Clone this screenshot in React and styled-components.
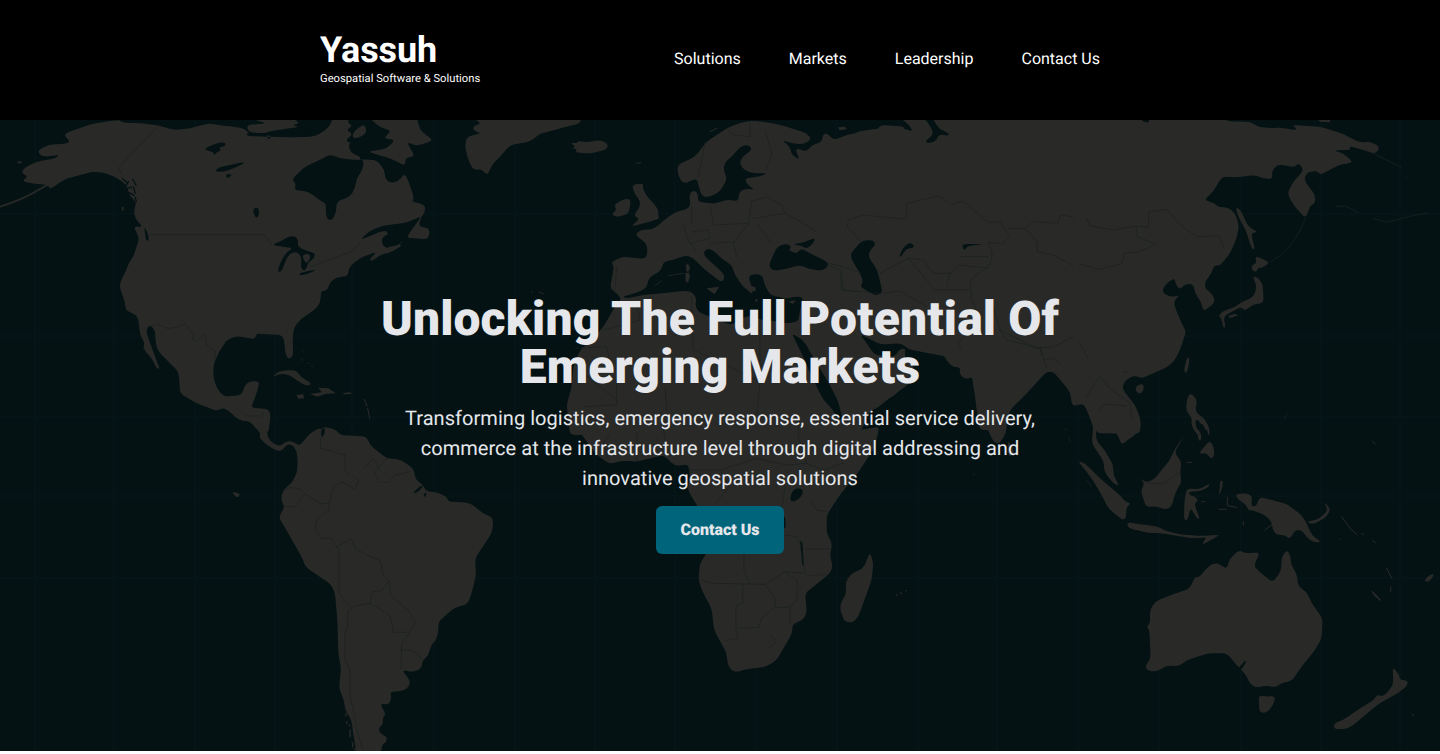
import React from 'react';
import styled, { createGlobalStyle } from 'styled-components';

const SEA = '#041214';
const LAND = '#292a28';
const BORDER = '#182020';

const GlobalStyle = createGlobalStyle`
  *, *::before, *::after { box-sizing: border-box; }
  body {
    margin: 0;
    background: #fff;
    font-family: Roboto, sans-serif;
    text-rendering: geometricPrecision;
  }
`;

const Header = styled.header`
  height: 120px;
  background: #000;
  color: #fff;
`;

const HeaderInner = styled.div`
  width: 800px;
  height: 100%;
  margin: 0 auto;
  padding-bottom: 2px;
  display: flex;
  align-items: center;
  justify-content: space-between;
`;

const Brand = styled.a`
  display: flex;
  flex-direction: column;
  padding-bottom: 2px;
  color: inherit;
  text-decoration: none;
`;

const BrandName = styled.span`
  font-size: 36px;
  line-height: 40px;
  font-weight: 700;
  letter-spacing: -0.1px;
`;

const Tagline = styled.span`
  font-size: 11.2px;
  line-height: 17px;
  letter-spacing: 0.01px;
`;

const Nav = styled.nav`
  display: flex;
  gap: 48px;
  padding-right: 20px;
`;

const NavLink = styled.a`
  font-size: 16px;
  line-height: 24px;
  color: #fff;
  text-decoration: none;
`;

const Hero = styled.main`
  display: grid;
  height: 631px;
  background: ${SEA};
  overflow: hidden;
`;

const MapArt = styled.svg`
  grid-area: 1 / 1;
  display: block;
  width: 1440px;
  height: 631px;
  justify-self: center;
`;

const HeroContent = styled.section`
  grid-area: 1 / 1;
  z-index: 1;
  display: flex;
  flex-direction: column;
  align-items: center;
  padding-top: 175px;
  color: #e5e7eb;
  text-align: center;
`;

const Title = styled.h1`
  width: 720px;
  margin: 0;
  font-size: 48px;
  line-height: 48px;
  font-weight: 900;
  letter-spacing: 0.13px;
`;

const Lead = styled.p`
  width: 660px;
  margin: 12px 0 13px;
  font-size: 20px;
  line-height: 30px;
  letter-spacing: 0.04px;
`;

const Cta = styled.a`
  display: flex;
  align-items: center;
  justify-content: center;
  width: 128px;
  height: 48px;
  padding-bottom: 2px;
  border-radius: 6px;
  background: #00647a;
  color: #e5e7eb;
  font-size: 16px;
  font-weight: 900;
  text-decoration: none;
`;

const CORNER = 14;

// Rounds every corner of a closed outline, so that coasts read as curves.
const roundOutline = (sub) => {
  if (/[hvlmcq]/.test(sub)) return `${sub}Z`;
  const n = (sub.match(/-?\d+(\.\d+)?/g) || []).map(Number);
  const pts = [];
  for (let i = 0; i + 1 < n.length; i += 2) pts.push([n[i], n[i + 1]]);
  if (pts.length < 3) return `${sub}Z`;
  const toward = (p, q) => {
    const len = Math.hypot(q[0] - p[0], q[1] - p[1]) || 1;
    const t = Math.min(0.5, CORNER / len);
    return `${(p[0] + (q[0] - p[0]) * t).toFixed(1)},${(p[1] + (q[1] - p[1]) * t).toFixed(1)}`;
  };
  const parts = pts.map((p, i) => {
    const prev = pts[(i + pts.length - 1) % pts.length];
    const next = pts[(i + 1) % pts.length];
    return `${i ? 'L' : 'M'}${toward(p, prev)}Q${p[0]},${p[1]} ${toward(p, next)}`;
  });
  return `${parts.join('')}Z`;
};

const smooth = (d) => d.split('Z').filter((s) => s.trim()).map(roundOutline).join('');

const LandPath = styled.path`
  fill: ${LAND};
`;
const SeaPath = styled.path`
  fill: ${SEA};
`;
const Land = ({ d }) => <LandPath d={smooth(d)} />;
const Sea = ({ d }) => <SeaPath d={smooth(d)} />;

const Line = styled.path`
  fill: none;
  stroke: ${(p) => p.$color || BORDER};
  stroke-width: ${(p) => p.$w || 2};
  stroke-linejoin: round;
  stroke-linecap: round;
`;

const GridLines = styled.g`
  stroke: #061719;
  stroke-width: 1;
`;

const GRID_X = [35, 114, 195, 275, 352, 434, 515, 595, 675, 756, 837, 918, 997, 1078, 1159, 1241, 1321, 1400];
const GRID_Y = [214, 336, 417, 496, 578];

// Every sheet of the map is drawn at three times its size on the page.
const Sheet = ({ x, y, children }) => (
  <g transform={`translate(${x} ${y}) scale(0.33333)`}>{children}</g>
);

const WorldMap = () => (
  <MapArt viewBox="0 120 1440 631" aria-hidden="true">
    <GridLines>
      {GRID_X.map((x) => <line key={x} x1={x} x2={x} y1="120" y2="751" />)}
      {GRID_Y.map((y) => <line key={y} x1="0" x2="1440" y1={y} y2={y} />)}
    </GridLines>

    {/* North America, east, with Greenland */}
    <Sheet x={240} y={110}>
      <Land d="M-60,75L180,82 230,80 270,50 280,20 325,20 330,60 375,80 330,98 300,112 260,130 300,150 372,148 410,150 435,180 435,205 460,218 495,190 510,225 522,265 515,275 535,278 556,288 555,305 540,328 495,385 480,402 480,408 460,425 420,435 400,452 395,445 410,425 370,440 345,455 325,475 325,497 290,503 270,515 265,535 255,543 243,542 240,580 225,598 185,625 162,650 157,690 160,735 148,748 137,735 133,690 125,675 50,671 -60,600Z" />
    </Sheet>

    {/* North America, west */}
    <Sheet x={0} y={110}>
      <Land d="M190,72L240,54 275,42 330,33 360,30 365,37 430,41 475,46 520,60 565,56 600,47 628,40 665,47 700,50 735,56 755,78 800,76 840,80 900,82 950,78 990,50 1000,20 1080,20 1080,400 1000,460 1000,505 975,540 963,542 960,580 945,598 905,625 882,650 877,690 880,735 867,748 857,735 853,690 845,675 820,671 770,668 765,688 735,682 710,678 680,690 655,730 640,765 640,800 650,835 672,860 725,855 735,825 750,813 778,815 775,830 765,865 752,893 805,897 812,915 805,970 770,960 752,935 715,930 690,905 670,893 650,903 635,897 590,880 540,850 538,810 535,785 505,755 475,725 467,700 465,660 450,645 440,655 440,672 455,712 465,740 480,777 470,775 455,745 428,715 435,700 420,675 415,625 405,612 377,602 375,575 358,530 365,505 380,480 385,460 400,440 418,385 400,348 430,352 405,325 402,300 410,275 390,260 380,225 345,200 310,188 270,185 225,195 190,210 150,238 145,225 90,220 65,212 85,200 65,190 70,175 110,155 165,145 180,135 130,140 117,132 115,120 145,105 205,100 208,92Z" />
      <Land d="M740,45L800,40 760,28 890,28 900,50 850,58 820,62 790,70 745,66Z" />
      <Line $color={LAND} $w={5} d="M0,290Q70,268 115,240T200,203L268,185" />
      <Line $color={LAND} $w={5} d="M55,157h8M368,292v8" />
      <Sea d="M614,115L640,104 660,97 678,98 675,110 655,112 665,122 650,125 643,138 640,125 620,122ZM643,185L655,172 690,165 730,156 733,160 700,175 670,186ZM680,192l15,2-8,9-8-1ZM758,298L770,291 778,300 775,322 765,322ZM740,68L800,72 803,88 812,86 812,72 900,66 955,60 950,78 880,82 740,78ZM815,405L840,395 865,380 885,378 895,390 893,410 920,423 948,430 938,450 925,455 920,475 910,483 902,470 905,440 890,425 870,430 857,450 845,485 832,486 840,460 860,425 880,415 850,410ZM897,490L915,485 950,478 930,490 900,497ZM432,350L442,365 448,390 438,393 436,375Z" />
      <Land d="M905,435L925,430 932,440 925,455 917,460Z" />
      <Line d="M475,47L357,172 370,205M450,374H795L815,405M450,648Q480,640 500,655 535,655 555,640L580,675 578,690 590,694 615,672 620,705 645,722 645,750M1080,400Q1060,430 1030,432 990,450 930,470M735,918h40M792,905l-15,30" />
      <Line $color={SEA} $w={4} d="M368,207l12,10M385,215l-8,14M398,207l10,18M380,235l14-3M400,230l6,20M388,248l14,8M405,262l4,12" />
      <Land d="M815,803L835,784 860,780 890,782 902,800 937,822 920,828 890,812 870,795 840,790ZM890,855l20-2 2,12-18,1ZM930,852l35-5-10-14 30,2 22,15-30,2-25,8ZM1028,849l22-2 7,5-25,1Z" />
      <Line $color={LAND} $w={3} d="M908,722v1M905,748l3,3M925,760v1M935,768l2,2" />
    </Sheet>

    {/* Hudson Bay, the Gulf of St Lawrence and the Arctic islands */}
    <Sheet x={240} y={110}>
      <Sea d="M330,20L395,20 385,80 350,92 325,100 318,88 340,72 318,60 338,48 322,38ZM155,45L200,35 240,40 270,35 240,52 260,62 225,68 215,55 180,52Z" />
      <Land d="M385,20L530,20 540,60 580,92 530,108 500,95 525,140 497,142 495,168 450,145 400,130 385,125 440,115 465,90 430,85 455,62 420,52ZM280,138L310,114 352,142 320,140ZM345,60L375,42 380,70 350,86 335,80Z" />
      <Land d="M498,383L545,318 535,350 570,355 565,388Z" />
      <Land d="M690,20L1025,20 1020,40 960,55 905,68 870,95 810,105 780,140 755,165 745,190 738,192 725,178 700,180 685,150 675,110 680,80 725,70 700,62 700,48 725,40Z" />
      <Sea d="M325,100L380,76 390,45 420,52 430,70 420,85 465,90 440,115 380,125 400,135 450,145 495,168 495,190 475,214 450,220 435,205 435,180 410,150 372,148 330,125Z" />
      <Sea d="M155,208L195,170 250,145 270,133 300,145 345,150 372,148 368,180 350,205 345,235 330,260 290,275 288,310 275,332 262,328 257,310 258,280 245,275 205,245 163,240 168,220Z" />
      <Sea d="M360,390L390,362 430,347 500,338 545,318 500,380 480,402 450,417 430,410 423,390 435,375 445,375 440,362 420,365 390,378Z" />
      <Line $color={LAND} $w={8} d="M395,448Q415,420 478,408" />
      <Line $color={LAND} $w={3} d="M875,546h3M898,546l12,5M373,868l8,20M383,895l6,30" />
    </Sheet>

    {/* South America */}
    <Sheet x={200} y={420}>
      <Land d="M140,-10L210,-10 200,40 210,65 240,80 258,63 280,65 298,78 330,40 355,25 365,28 372,20 410,30 420,45 500,50 510,75 560,115 600,118 640,145 648,180 665,190 680,215 705,215 740,230 745,245 800,247 820,255 850,282 875,290 880,310 875,340 825,415 828,465 815,520 802,553 765,562 715,605 715,640 705,665 695,672 683,710 668,720 665,745 640,756 605,750 630,780 628,800 610,813 570,815 575,835 565,855 540,850 558,885 548,890 550,912 535,925 540,940 560,950 560,965 545,975 543,1003 470,1003 458,930 455,900 435,870 432,840 417,805 423,745 415,700 412,600 405,520 395,495 315,440 310,420 255,322 240,300 238,285 255,262 242,240 250,208 275,190 292,155 293,120 290,92 275,72 258,75 248,92 230,92 205,78 178,55 182,40 165,20Z" />
      <Sea d="M362,30L375,22 375,38 365,57ZM638,218L665,195 670,200 648,220ZM668,225L680,215 677,233Z" />
      <Line d="M362,55V85L435,105V150L445,165M250,215L265,203 300,205 315,222 285,260 250,258M315,222L360,250 387,250 403,195 430,187 465,207 477,180 455,165M387,250V270L350,300 345,320 362,355H395L410,380 455,357 465,387 540,422 550,465 567,485M410,380L417,390V520L457,565M567,485L545,512 517,515 510,550 465,558 443,575V620L435,640V720L450,750V830L465,890 470,930 490,993M567,485L573,530 625,570 647,610 605,670 603,745M510,550L570,585 580,637H620M605,690L635,690 670,720M560,115L525,155 535,185 565,187 585,165 630,155M490,145L520,115 540,150" />
      <Line $color={LAND} $w={4} d="M438,880v8M440,905v5M450,930v20M458,968v12M448,915v3M465,985v5" />
      <Land d="M97,218l10-1 12,5-2,8-9,1Z" />
    </Sheet>

    {/* Europe and North Africa */}
    <Sheet x={540} y={110}>
      <Land d="M-20,20L122,20 102,43 0,72 -20,70Z" />
      <Land d="M90,98L115,100 110,92 140,97 180,90 205,102 200,118 150,131 105,127 112,118 95,115 108,110ZM275,225L310,220 308,235 320,258 345,285 357,305 353,318 360,325 320,338 273,350 300,325 280,318 300,290 300,270 285,255ZM222,285L245,270 265,265 273,275 265,312 225,322 216,310 230,300Z" />
      <Land d="M210,535L222,470 213,455 250,440 315,447 323,430 320,400 285,375 300,360 340,358 385,320 410,305 440,298 452,285 447,250 465,240 475,255 473,275 500,278 520,282 565,268 595,275 597,245 620,235 645,240 620,222 615,205 655,200 685,190 640,190 615,182 600,165 602,145 635,120 630,107 610,105 590,122 575,140 555,155 550,180 562,205 540,245 505,262 485,258 475,225 470,205 430,222 415,200 412,165 465,140 500,95 560,55 600,38 640,32 700,40 740,50 800,70 815,88 790,103 755,100 725,90 750,110 755,135 780,150 768,125 770,115 800,125 815,105 845,97 850,70 865,72 880,90 930,72 1010,65 1020,45 1095,50 1095,825 1060,860 1000,882 960,970 90,975 80,885 95,830 100,770 120,720 155,690 190,650 225,590 245,568 230,550Z" />
      <Land d="M895,52l20-2 5,8-22,3Z" />
      <Sea d="M247,560L300,545 322,530 325,505 365,480 370,455 400,450 435,437 455,440 490,475 545,518 555,500 545,485 500,445 490,430 500,415 520,420 540,442 575,465 587,500 610,530 640,555 632,520 625,500 640,492 668,495 672,520 690,555 720,562 740,567 760,560 790,560 780,600 775,635 740,640 700,632 660,630 640,615 600,625 580,645 540,635 515,620 480,610 465,590 470,565 455,545 435,542 380,548 310,555 260,565Z" />
      <Land d="M437,468l6-8 7,12-3,12-7,2ZM436,490l9-3 5,10-5,20-8,0ZM500,535l38-5-15,23ZM630,525l18,8-3,12-12-5ZM645,567l10,2-8,8ZM745,575l22-5-8,12Z" />
      <Sea d="M690,455L712,410 740,400 755,412 745,420 770,432 782,415 830,440 862,455 865,470 845,482 810,478 780,465 735,478 700,482 688,472ZM755,403L790,398 825,383 822,398 800,417 785,407Z" />
      <Sea d="M755,670L790,690 830,760 870,825 895,875 908,930 905,960 880,900 850,870 815,800 785,730Z" />
      <Line d="M485,150L475,200M495,95L485,150M565,60L580,75 630,80M630,40V80M675,60L695,130 680,180M455,290V340M510,285L520,345 625,340 635,275 680,260 725,285 735,310 640,325M625,340L580,400 590,440M655,345L690,395M735,310L800,345 828,365M430,340L440,380 470,430M460,365L505,360 510,385 450,400M510,400L580,395M230,470L225,540M865,465L900,480 905,540 950,545M925,330L970,315 1080,328M925,330V360L960,390M105,715L200,710 208,745 130,790 230,870M230,750V885L130,890M290,580L300,630 190,660M455,560L460,720 560,765M660,640V820L645,960M375,830L380,900M560,765L650,810" />
      <Line $color={LAND} $w={3} d="M290,160l12,-2M425,160l-10,10M510,65l20,-10" />
      <Line $color={LAND} d="M345,527L365,512M385,497L430,490" />
    </Sheet>

    {/* Southern Africa */}
    <Sheet x={540} y={420}>
      <Land d="M80,-10L130,50 170,105 210,132 245,122 290,125 370,105 405,138 445,133 450,165 443,210 470,255 500,300 508,345 500,400 480,430 475,480 490,520 515,565 522,630 560,700 563,735 575,752 590,756 620,747 680,740 710,720 757,640 757,612 790,600 801,575 795,520 870,460 878,440 870,405 877,370 860,340 860,285 900,225 960,150 1005,80 1018,20 915,37 900,-10ZM990,397L1000,430 995,480 955,590 940,607 915,607 900,570 903,545 918,525 917,485 935,460 970,445Z" />
      <Sea d="M750,235L758,210 780,203 792,215 775,240 755,246ZM780,360L787,365 792,435 787,438ZM731,290L736,290 737,325 732,325Z" />
      <Line d="M480,480L520,490 675,493 735,455 773,485 770,540 750,560V612M612,400V450L627,490M608,495V550L588,560V625L593,655 555,662M593,625L657,622 663,595 705,562V535L675,493M705,562L750,562M735,345L770,350 780,375 797,460 735,455M797,387H870M800,468L860,463M690,645L710,665 685,685M445,150H540L570,200 525,250M540,150L650,115 740,135 800,130 850,150 910,130M735,200L725,270M810,240L830,270 860,275M210,40L190,70 205,120M290,40V120M370,30L385,110M775,0V50L800,130" />
      <Line $color={LAND} $w={4} d="M1070,525v1M1083,518v3M1098,511v1" />
    </Sheet>

    {/* Central Asia */}
    <Sheet x={780} y={110}>
      <Land d="M200,90L230,65 300,55 305,48 350,50 400,65 385,42 355,20 1095,20 1095,797 1055,797 1028,820 1028,840 1065,885 1082,930 1080,970 950,970 940,935 910,880 890,887 875,870 870,845 820,785 800,785 740,850 690,900 670,960 600,960 590,900 578,800 560,808 540,797 545,775 525,768 500,740 385,718 360,700 300,705 240,672 285,735 345,740 360,715 370,745 405,770 390,820 340,855 290,895 190,935 185,900 150,700 240,560 320,560 280,440 290,390 240,390 180,400Z" />
      <Sea d="M212,430L230,410 245,392 280,390 287,405 270,420 265,440 292,480 308,548 285,557 240,530 250,515 235,480 215,450ZM240,672L285,735 345,740 360,715 385,718 365,700 300,703ZM357,440L370,412 390,397 402,405 400,414 380,415 363,440ZM548,405l15-3 45,0-45,7-8,10-6-3ZM950,258L965,275 950,300 908,324 915,313 945,290ZM430,20L455,55 460,75 433,95 450,100 470,92 476,72 510,78 500,65 478,58 455,20Z" />
      <Line d="M240,392L202,350 205,330 250,315 378,328 380,280 475,258 515,283 550,274 625,337 660,335 687,375 670,402 625,397 637,430 630,465 570,510 575,560M687,355H735L760,335 835,340 840,315 910,325 960,350 1080,350M735,355L772,395V425L820,435 870,462 950,478 1020,465 1035,430 1080,425M145,460L190,470 245,490M185,480L190,540 300,550 360,543 440,590M300,490L385,445 465,540H570M385,445L430,450 460,490H510L540,465 625,475M540,440H625M510,490L500,530M640,590L660,660 770,715 820,710 880,680 910,700 920,750 960,805 1045,785M570,560L600,620 535,700 550,725M660,660L680,690 780,715L795,780M800,745L830,750 825,785M960,805L915,870M960,805L1000,860 1060,885" />
    </Sheet>

    {/* East Asia */}
    <Sheet x={1080} y={110}>
      <Land d="M-20,20L415,20 445,34 515,36 530,50 580,55 600,52 640,60 652,57 635,45 720,50 790,72 840,98 870,95 900,110 888,132 850,120 808,108 812,120 760,121 790,130 820,157 775,165 750,180 720,195 712,182 680,188 672,210 690,235 706,255 705,280 692,285 677,325 640,285 622,250 640,215 672,180 655,158 645,172 610,165 590,165 575,185 578,208 550,205 525,195 470,202 430,200 420,210 400,245 372,270 405,280 415,292 445,292 465,310 477,345 470,385 450,430 420,468 402,465 395,490 375,515 375,535 400,555 405,578 370,605 363,575 345,550 340,522 315,522 300,540 285,520 285,505 265,515 248,535 250,550 275,562 300,555 280,575 290,605 310,650 318,665 310,690 300,720 285,750 265,770 185,805 175,800 155,797 128,820 128,840 165,885 182,930 180,970 80,970 70,935 55,935 45,960 10,875 -20,870Z" />
      <Land d="M467,292L480,297 505,350 535,367 513,368 525,420 515,415 497,360 475,320ZM525,437L570,457 545,475 535,472 530,487 515,480 515,465 530,460ZM517,500L530,500 548,520 551,580 520,582 495,603 483,590 430,620 437,650 430,655 425,625 415,618 430,602 465,592 485,575 515,565 528,545 528,520ZM445,618l20-7 10,5-25,8ZM312,780L320,745 329,742 325,775 317,792ZM167,828L190,820 192,840 180,852 167,845ZM330,848L352,868 345,905 378,930 388,960 375,960 370,940 345,925 350,960 338,950 335,920 318,905 320,870ZM715,30h35v7l-30-2Z" />
      <Line $color="#1f2422" d="M677,325Q640,420 570,457M850,115L965,172M977,203h5M770,288L800,290 835,308M880,325L920,337 985,320 1045,308M622,910l-10,18" />
      <Line d="M20,325L30,347 100,360 168,348 205,352 207,305 260,298 295,340 350,380 415,377 433,415M168,348L172,380 228,403 180,425 133,430 125,462 55,478 0,462M0,700L20,740 60,800 105,778 145,787M60,800L75,840 120,880 150,900 155,940M60,800L10,870M60,920L65,895 145,885" />
      <Sea d="M185,30h22v7l-15-1Z" />
    </Sheet>

    {/* South and South-East Asia */}
    <Sheet x={900} y={330}>
      <Land d="M130,78L155,110 182,112 177,128 195,148 218,135 218,160 235,235 262,295 280,335 295,342 310,325 320,300 320,240 380,180 410,140 440,124 470,122 490,155 512,190 515,225 530,228 550,215 565,250 580,290 575,340 612,395 612,425 640,460 658,468 640,435 640,405 610,355 595,340 587,320 592,278 612,275 640,295 658,325 665,345 685,328 705,315 720,295 720,262 700,225 668,185 670,90 130,60ZM325,335l10,10 8,25-14,10-6-15ZM533,392L555,400 600,445 635,475 665,500 675,515 693,520 680,530 677,570 660,565 625,535 605,495 575,445ZM682,575L725,588 770,590 795,603 750,610 685,593Z" />
      <Line d="M420,50L440,115M430,90L460,85 480,100M600,140L560,200M600,140L630,175 690,220 695,270M600,240L610,222 680,228" />
      <Line $color="#1f2422" d="M220,430l3,6M495,295l4,6M507,325l3,10M560,450l15,20" />
    </Sheet>

    {/* Oceania */}
    <Sheet x={1120} y={420}>
      <Land d="M55,170L75,187 100,180 150,120 160,95 198,37 163,98 185,125 180,160 185,185 165,220 155,260 135,270 110,258 78,262 62,210 75,190ZM20,307L65,313 115,320 130,330 180,343 240,348 302,344 275,358 250,373 247,368 262,352 215,355 125,340 90,338 25,325ZM192,300L193,245 200,205 240,208 268,190 268,198 245,213 205,215 210,228 225,228 235,243 222,250 240,298 230,295 212,262 203,300ZM240,95L270,60 283,85 282,110 272,117 260,98 240,102ZM213,0L222,0 225,20 245,40 242,68 232,50 235,45 217,25ZM235,0L262,10 270,35 265,50 260,20 240,10ZM300,182L310,182 305,210 295,228 300,205Z" />
      <Land d="M347,222L385,220 397,232 393,260 410,258 418,230 455,240 500,252 545,285 560,310 575,345 605,367 580,367 560,352 545,330 525,330 510,358 495,345 470,345 458,330 455,305 435,285 395,270 385,272 380,255 352,237ZM560,305L595,298 625,270 610,245 632,265 622,288 600,303 575,313Z" />
      <Land d="M358,390L375,400 420,397 402,437 412,450 458,487 483,455 485,410 502,388 512,410 513,435 530,460 535,500 560,515 575,550 608,595 605,655 585,690 545,740 515,783 480,790 470,802 435,797 410,803 392,795 378,765 350,735 320,700 265,700 200,720 180,738 140,737 110,755 85,753 75,740 92,715 88,630 80,620 90,610 90,570 105,545 140,530 210,505 225,470 237,473 265,438 290,428 310,440 320,445 330,415ZM416,825L440,830 467,828 460,855 440,878 418,878ZM818,740L838,765 840,780 865,782 860,800 825,825 795,840 765,860 700,915 680,927 642,927 642,910 670,900 720,865 765,838 770,823 790,830 820,795ZM750,505L790,547 765,532ZM913,485L920,470 945,458 930,485Z" />
      <Sea d="M350,750L375,722 380,725 360,755Z" />
      <Line $color={LAND} $w={3} d="M298,268h20M322,232v25l28,5M455,315l-20,15M665,290l25,35 20,18M725,340l5,5M758,362l8,6M370,305v10M200,127h15M245,245h10M800,445l15,30M812,500v15M877,885h4M758,65l8,6M660,357v1" />
      <Line d="M75,187Q130,200 150,177T183,162" />
    </Sheet>
  </MapArt>
);

const LINKS = ['Solutions', 'Markets', 'Leadership', 'Contact Us'];

export default function App() {
  return (
    <>
      <GlobalStyle />
      <Header>
        <HeaderInner>
          <Brand href="#">
            <BrandName>Yassuh</BrandName>
            <Tagline>Geospatial Software &amp; Solutions</Tagline>
          </Brand>
          <Nav>
            {LINKS.map((label) => <NavLink href="#" key={label}>{label}</NavLink>)}
          </Nav>
        </HeaderInner>
      </Header>
      <Hero>
        <WorldMap />
        <HeroContent>
          <Title>Unlocking The Full Potential Of Emerging Markets</Title>
          <Lead>
            Transforming logistics, emergency response, essential service delivery, commerce at the
            infrastructure level through digital addressing and innovative geospatial solutions
          </Lead>
          <Cta href="#">Contact Us</Cta>
        </HeroContent>
      </Hero>
    </>
  );
}
